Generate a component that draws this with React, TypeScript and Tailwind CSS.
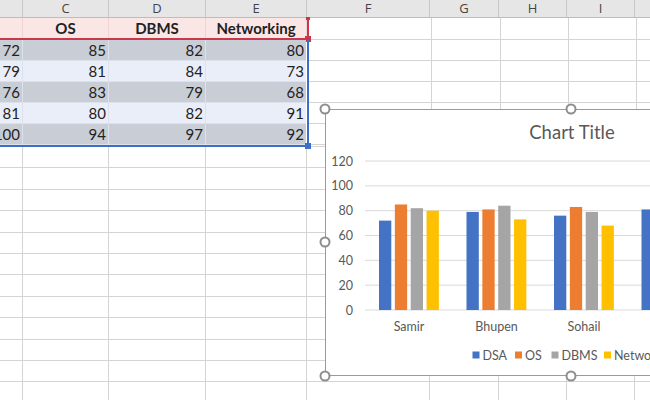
const leftCols = [
  { key: "B", w: "w-[23px]" },
  { key: "C", w: "w-[86px]" },
  { key: "D", w: "w-[97px]" },
  { key: "E", w: "w-[101px]" },
];

const rightCols = [
  { key: "F", w: "w-[123px]" },
  { key: "G", w: "w-[69px]" },
  { key: "H", w: "w-[68px]" },
  { key: "I", w: "w-[68px]" },
  { key: "J", w: "w-[40px]" },
];

const letters = [
  { key: "B", w: "w-[23px]", label: "" },
  { key: "C", w: "w-[86px]", label: "C" },
  { key: "D", w: "w-[97px]", label: "D" },
  { key: "E", w: "w-[101px]", label: "E" },
  ...rightCols.map((c) => ({ ...c, label: c.key === "J" ? "" : c.key })),
];

const headers = ["", "OS", "DBMS", "Networking"];

const data = [
  { name: "Samir", v: [72, 85, 82, 80] },
  { name: "Bhupen", v: [79, 81, 84, 73] },
  { name: "Sohail", v: [76, 83, 79, 68] },
  { name: "Amit", v: [81, 80, 82, 91] },
  { name: "Rahul", v: [100, 94, 97, 92] },
];

const series = [
  { name: "DSA", color: "#4472c4" },
  { name: "OS", color: "#ed7d31" },
  { name: "DBMS", color: "#a5a5a5" },
  { name: "Networking", color: "#ffc000" },
];

const cellFont = { fontFamily: "Lato, 'Open Sans', 'Liberation Sans', sans-serif" };
const uiFont = { fontFamily: "'Open Sans', 'Liberation Sans', sans-serif" };

function ColumnHeader() {
  return (
    <div className="flex h-[18px] bg-[#e6e6e6] border-b border-[#bdbdbd]" style={uiFont}>
      {letters.map((c) => (
        <div
          key={c.key}
          className={`${c.w} shrink-0 border-r border-[#c8c8c8] flex items-center justify-center text-[13px] text-[#444]`}
        >
          {c.label}
        </div>
      ))}
    </div>
  );
}

function EmptyCells({ h }: { h: string }) {
  return (
    <div className={`flex ${h} box-border`}>
      {rightCols.map((c) => (
        <div key={c.key} className={`${c.w} shrink-0 box-border border-r border-b border-[#d4d4d4]`} />
      ))}
    </div>
  );
}

function EmptyRow() {
  return (
    <div className="flex h-[21.4px] box-border">
      {[...leftCols, ...rightCols].map((c) => (
        <div key={c.key} className={`${c.w} shrink-0 box-border border-r border-b border-[#d4d4d4]`} />
      ))}
    </div>
  );
}

function Handle({ x, y }: { x: number; y: number }) {
  return (
    <div
      className="absolute w-[11px] h-[11px] rounded-full border-2 border-[#8e8e8e] bg-white -translate-x-1/2 -translate-y-1/2"
      style={{ left: x, top: y }}
    />
  );
}

function BarChart() {
  const zeroY = 200;
  const perUnit = 24.83 / 20;
  const ticks = [0, 20, 40, 60, 80, 100, 120];
  const legendX = [146.5, 189, 225.5, 278];
  return (
    <svg width="493" height="267" className="block" style={cellFont}>
      <text x="246" y="29" textAnchor="middle" fontSize="18.5" fill="#595959">
        Chart Title
      </text>
      {ticks.map((t) => {
        const y = zeroY - t * perUnit;
        return (
          <g key={t}>
            <line x1="39" x2="493" y1={y} y2={y} stroke="#d9d9d9" strokeWidth="1" />
            <text x="27" y={y + 4.5} textAnchor="end" fontSize="12.5" fill="#595959">
              {t}
            </text>
          </g>
        );
      })}
      {data.slice(0, 4).map((d, gi) => {
        const gx = 53 + gi * 87.5;
        return (
          <g key={d.name}>
            {d.v.map((v, si) => (
              <rect
                key={si}
                x={gx + si * 15.85}
                y={zeroY - v * perUnit}
                width="12.3"
                height={v * perUnit}
                fill={series[si].color}
              />
            ))}
            {gi < 3 && (
              <text x={gx + 30} y="221" textAnchor="middle" fontSize="12.5" fill="#595959">
                {d.name}
              </text>
            )}
          </g>
        );
      })}
      {series.map((s, i) => (
        <g key={s.name}>
          <rect x={legendX[i]} y="241.5" width="7" height="7" fill={s.color} />
          <text x={legendX[i] + 10} y="249.5" fontSize="12.5" fill="#595959">
            {s.name}
          </text>
        </g>
      ))}
    </svg>
  );
}

export default function App() {
  return (
    <div className="relative w-[650px] h-[400px] overflow-hidden bg-white text-[#222]" style={cellFont}>
      <ColumnHeader />

      <div className="flex">
        {/* selected source range */}
        <div className="flex flex-col">
          {/* header range (red) */}
          <div className="relative flex h-[22px] box-border border-r-2 border-b-2 border-[#c8374b]">
            {leftCols.map((c, i) => (
              <div
                key={c.key}
                className={`${c.w} shrink-0 bg-[#fbe6e6] border-r border-[#f0d4d4] last:border-r-0 last:w-[100px] flex items-center justify-center font-bold text-[15px]`}
              >
                {headers[i]}
              </div>
            ))}
            <span className="absolute -right-[4px] -bottom-[4px] w-[6px] h-[6px] bg-[#c8374b]" />
            <span className="absolute -right-[3px] -top-[1px] w-[4px] h-[3px] bg-[#c8374b]" />
          </div>

          {/* data range (blue) */}
          <div className="relative flex flex-col border-r-2 border-b-2 border-[#3b6fc9]">
            {data.map((d, ri) => (
              <div key={d.name} className="flex h-[21px] box-border">
                {leftCols.map((c, i) => (
                  <div
                    key={c.key}
                    className={`${c.w} shrink-0 box-border flex items-center justify-end pr-[2px] overflow-hidden whitespace-nowrap text-[15px] border-r border-b border-[#dde2ea] last:border-r-0 last:w-[100px] ${
                      ri % 2 === 0 ? "bg-[#c9cdd5]" : "bg-[#e9eef8]"
                    }`}
                  >
                    {d.v[i]}
                  </div>
                ))}
              </div>
            ))}
            <span className="absolute -right-[4px] -bottom-[4px] w-[6px] h-[6px] bg-[#3b6fc9]" />
          </div>
        </div>

        <div className="flex flex-col">
          <EmptyCells h="h-[22px]" />
          {data.map((d) => (
            <EmptyCells key={d.name} h="h-[21px]" />
          ))}
          <EmptyCells h="h-[2px]" />
        </div>
      </div>

      {Array.from({ length: 12 }).map((_, i) => (
        <EmptyRow key={i} />
      ))}

      {/* chart object floating over the sheet */}
      <div className="absolute left-[325px] top-[109px] w-[493px] h-[267px] bg-white border-[1.5px] border-[#9a9a9a] box-border">
        <BarChart />
      </div>
      <Handle x={325} y={109} />
      <Handle x={571} y={109} />
      <Handle x={325} y={242} />
      <Handle x={325} y={376} />
      <Handle x={571} y={376} />
    </div>
  );
}
